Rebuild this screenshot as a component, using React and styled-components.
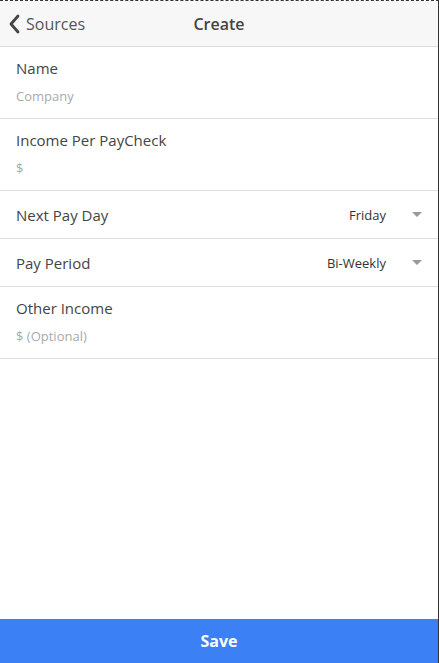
import React from 'react';
import styled, { createGlobalStyle } from 'styled-components';

const GlobalStyle = createGlobalStyle`
    html, body {
        margin: 0;
        padding: 0;
        background: #fff;
    }
    body {
        font-family: 'Open Sans', 'Noto Sans', sans-serif;
        color: #444;
    }
`;

const Page = styled.div`
    display: flex;
    flex-direction: column;
    height: 100vh;
    box-sizing: border-box;
    border-top: 1px dashed #333;
    border-right: 1px solid #333;
`;

const Header = styled.header`
    position: relative;
    display: flex;
    align-items: center;
    justify-content: center;
    height: 45px;
    flex-shrink: 0;
    background: #f7f7f7;
    border-bottom: 1px solid #ddd;
`;

const BackButton = styled.button`
    position: absolute;
    left: 8px;
    top: 0;
    bottom: 0;
    display: flex;
    align-items: center;
    gap: 5px;
    padding: 0;
    border: none;
    background: none;
    font-family: inherit;
    font-size: 16px;
    color: #555;
    cursor: pointer;
`;

const Title = styled.h1`
    margin: 0;
    font-size: 16px;
    font-weight: 600;
    color: #444;
`;

const Form = styled.div`
    flex: 1;
    display: flex;
    flex-direction: column;
`;

const InputRow = styled.label`
    display: flex;
    flex-direction: column;
    gap: 9px;
    padding: 11px 16px 13px;
    border-bottom: 1px solid #ddd;
`;

const Label = styled.span`
    font-size: 15px;
    line-height: 20px;
    color: #444;
`;

const Input = styled.input`
    padding: 0;
    border: none;
    outline: none;
    background: transparent;
    font-family: inherit;
    font-size: 13px;
    line-height: 18px;
    height: 18px;
    color: #444;

    &::placeholder {
        color: #aaa;
    }
`;

const SelectRow = styled.div`
    display: flex;
    align-items: center;
    justify-content: space-between;
    height: 47px;
    padding: 0 16px;
    border-bottom: 1px solid #ddd;
`;

const SelectValue = styled.div`
    display: flex;
    align-items: center;
    gap: 26px;
    font-size: 13px;
    color: #333;
`;

const Caret = styled.span`
    width: 0;
    height: 0;
    border-left: 5px solid transparent;
    border-right: 5px solid transparent;
    border-top: 5px solid #999;
`;

const SaveButton = styled.button`
    height: 44px;
    flex-shrink: 0;
    border: none;
    background: #3b80f5;
    color: #fff;
    font-family: inherit;
    font-size: 16px;
    font-weight: 700;
    cursor: pointer;
`;

const fields = [
    { type: 'input', label: 'Name', placeholder: 'Company' },
    { type: 'input', label: 'Income Per PayCheck', placeholder: '$' },
    { type: 'select', label: 'Next Pay Day', value: 'Friday' },
    { type: 'select', label: 'Pay Period', value: 'Bi-Weekly' },
    { type: 'input', label: 'Other Income', placeholder: '$ (Optional)' },
];

const App = () => {
    return (
        <>
            <GlobalStyle />
            <Page>
                <Header>
                    <BackButton>
                        <svg width="13" height="20" viewBox="0 0 13 20">
                            <polyline
                                points="10,2 3,10 10,18"
                                fill="none"
                                stroke="#444"
                                strokeWidth="2.8"
                                strokeLinecap="round"
                                strokeLinejoin="round"
                            />
                        </svg>
                        Sources
                    </BackButton>
                    <Title>Create</Title>
                </Header>
                <Form>
                    {fields.map((f) =>
                        f.type === 'input' ? (
                            <InputRow key={f.label}>
                                <Label>{f.label}</Label>
                                <Input placeholder={f.placeholder} />
                            </InputRow>
                        ) : (
                            <SelectRow key={f.label}>
                                <Label>{f.label}</Label>
                                <SelectValue>
                                    {f.value}
                                    <Caret />
                                </SelectValue>
                            </SelectRow>
                        )
                    )}
                </Form>
                <SaveButton>Save</SaveButton>
            </Page>
        </>
    );
};

export default App;
